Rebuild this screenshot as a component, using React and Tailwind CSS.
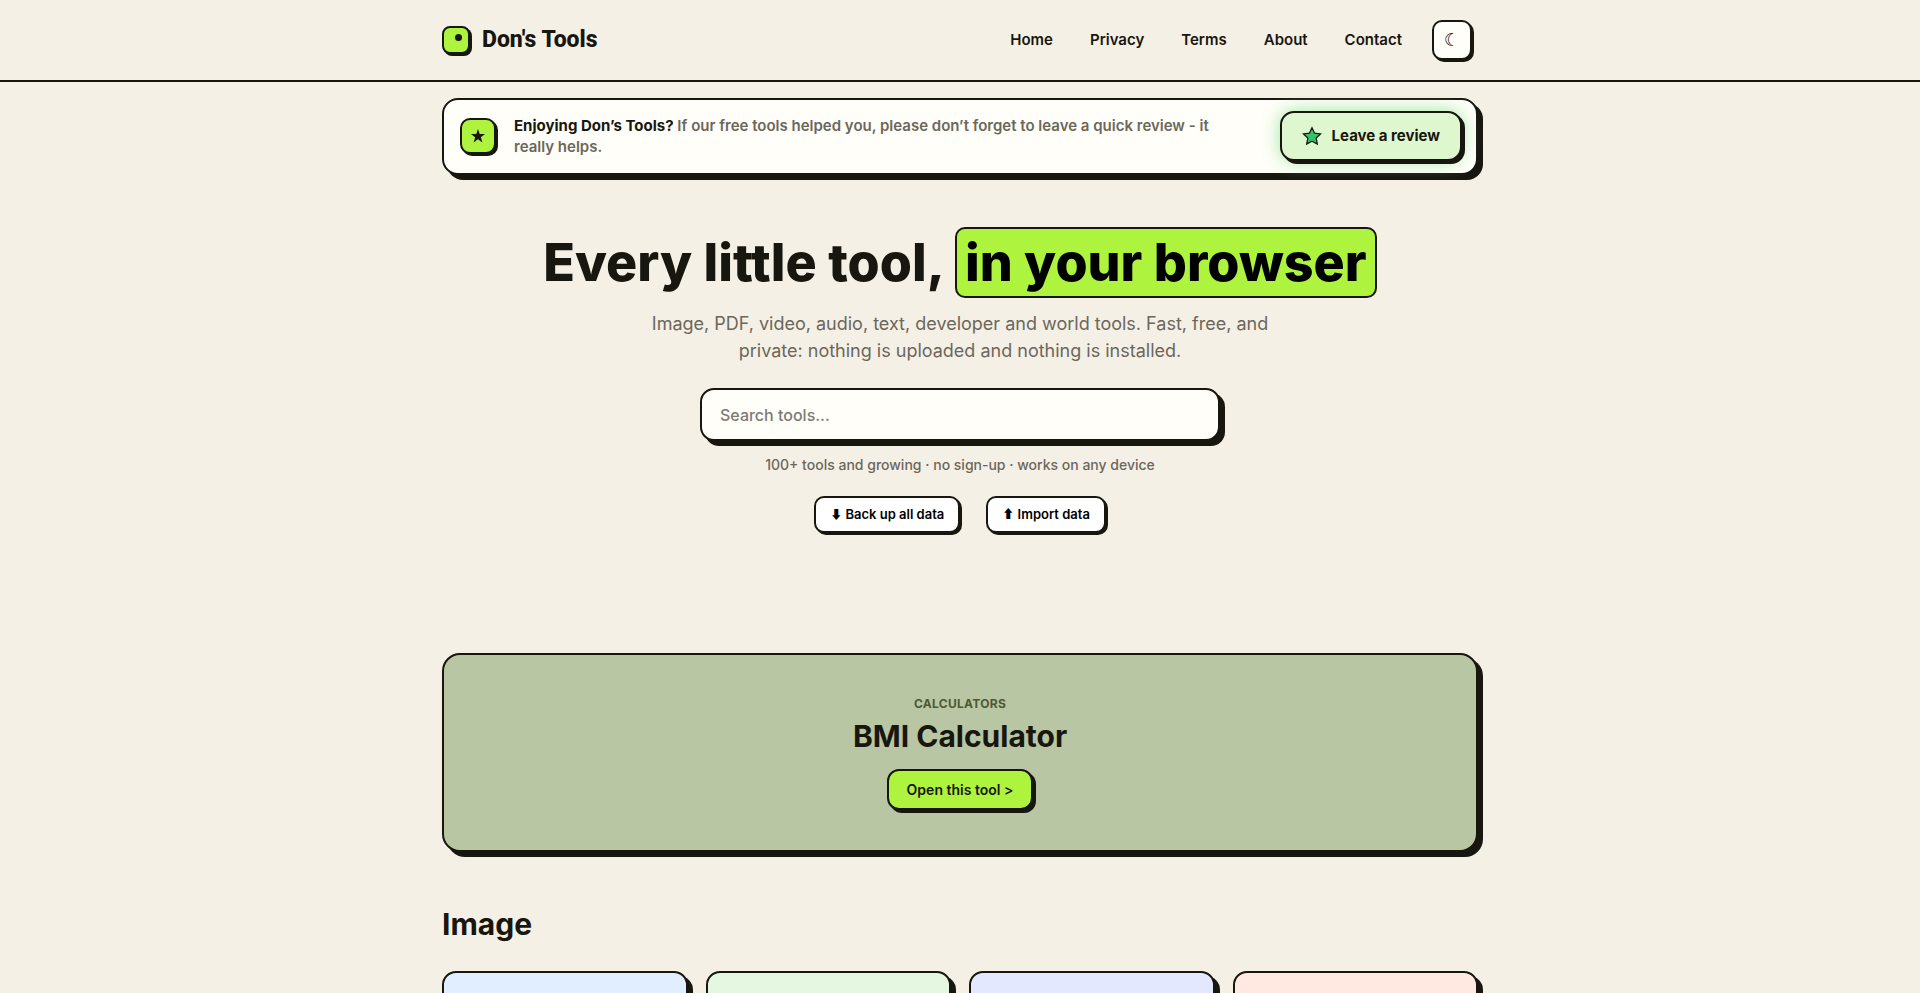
const links = ["Home", "Privacy", "Terms", "About", "Contact"];

const cards = [
  { id: "blue", className: "bg-[#e0eeff]" },
  { id: "green", className: "bg-[#e5f7e0]" },
  { id: "violet", className: "bg-[#e4e8ff]" },
  { id: "coral", className: "bg-[#ffe9e1]" },
];

function Star({ className }) {
  return (
    <svg viewBox="0 0 24 24" className={className} aria-hidden="true">
      <path d="M12 1.5l2.6 7.6h8l-6.4 4.8 2.4 7.7-6.6-4.7-6.6 4.7 2.4-7.7L1.4 9.1h8z" />
    </svg>
  );
}

function OutlineStar({ className }) {
  return (
    <svg viewBox="0 0 24 24" className={className} aria-hidden="true">
      <path d="M12 2l3.1 6.6 7.2.9-5.3 5 1.4 7.2-6.4-3.5-6.4 3.5L7 14.500l-5.300-5 7.200-.9z" />
    </svg>
  );
}

function Header() {
  return (
    <header className="border-b-2 border-[#17160f]">
      <div className="mx-auto flex h-20 max-w-[1080px] items-center justify-between px-[22px]">
        <a href="#" className="flex items-center gap-3 font-[Roboto,sans-serif] text-[23px] font-extrabold">
          <span className="flex size-7 justify-end rounded-lg border-2 border-[#17160f] bg-[#aef33e] p-[6px] shadow-[2px_2px_0_#17160f]">
            <span className="size-[7px] rounded-full bg-[#17160f]" />
          </span>
          Don's Tools
        </a>
        <div className="mr-[6px] flex items-center gap-[30px]">
          <nav className="flex gap-[37px] text-[15px] font-semibold">
            {links.map((link) => (
              <a key={link} href="#">
                {link}
              </a>
            ))}
          </nav>
          <button
            aria-label="Toggle theme"
            className="flex size-10 items-center justify-center rounded-[10px] border-2 border-[#17160f] bg-[#fffef9] font-['DejaVu_Sans',sans-serif] text-lg shadow-[2px_2px_0_#17160f]"
          >
            ☾
          </button>
        </div>
      </div>
    </header>
  );
}

function ReviewBanner() {
  return (
    <section className="mt-4 flex items-center gap-[18px] rounded-2xl border-2 border-[#17160f] bg-[#fffef9] pt-[11px] pr-[14px] pb-3 pl-4 shadow-[5px_5px_0_#17160f]">
      <span className="flex size-9 shrink-0 items-center justify-center rounded-[10px] border-2 border-[#17160f] bg-[#aef33e] shadow-[2px_2px_0_#17160f]">
        <Star className="size-4 fill-[#17160f]" />
      </span>
      <p className="flex-1 pr-12 text-[15px] leading-[21px] font-semibold text-[#6b675b]">
        <strong className="font-bold text-[#17160f]">Enjoying Don’s Tools?</strong> If our free tools helped you, please
        don’t forget to leave a quick review - it really helps.
      </p>
      <button className="flex h-[50px] shrink-0 items-center gap-[10px] rounded-[14px] border-2 border-[#17160f] bg-[#dff7cf] px-5 text-[15px] font-bold shadow-[3px_3px_0_#17160f,0_0_18px_#9be8a0]">
        <OutlineStar className="size-5 fill-[#35c26b] stroke-[#17160f] stroke-[1.5]" />
        Leave a review
      </button>
    </section>
  );
}

function Hero() {
  return (
    <section className="flex flex-col items-center pt-[52px] text-center">
      <h1 className="flex flex-wrap justify-center gap-x-[10px] text-[52px] leading-[71px] font-extrabold">
        <span>Every little tool,</span>
        <span className="rounded-[10px] border-2 border-[#17160f] bg-[#aef33e] px-2 leading-[67px] text-black">
          in your browser
        </span>
      </h1>
      <p className="mt-3 max-w-[640px] text-lg leading-[27px] text-[#6b675b]">
        Image, PDF, video, audio, text, developer and world tools. Fast, free, and private: nothing is uploaded and
        nothing is installed.
      </p>
      <input
        type="search"
        aria-label="Search tools"
        placeholder="Search tools..."
        className="mt-6 h-[53px] w-full max-w-[520px] rounded-[14px] border-2 border-[#17160f] bg-[#fffef9] px-[18px] text-base font-medium shadow-[5px_5px_0_#17160f] outline-none placeholder:text-[#7b7a76]"
      />
      <p className="mt-[14px] text-sm leading-5 font-medium text-[#6b675b]">
        100+ tools and growing · no sign-up · works on any device
      </p>
      <div className="mt-[21px] flex gap-[26px] text-[13px] font-semibold text-black">
        <button className="h-[37px] rounded-[10px] border-2 border-[#17160f] bg-white px-[14px] shadow-[2px_2px_0_#17160f]">
          <span className="font-['Noto_Sans_CJK_JP',sans-serif] text-xs">⬇</span> Back up all data
        </button>
        <button className="h-[37px] rounded-[10px] border-2 border-[#17160f] bg-white px-[14px] shadow-[2px_2px_0_#17160f]">
          <span className="font-['Noto_Sans_CJK_JP',sans-serif] text-xs">⬆</span> Import data
        </button>
      </div>
    </section>
  );
}

function FeaturedTool() {
  return (
    <section className="mt-[120px] flex flex-col items-center rounded-[18px] border-2 border-[#17160f] bg-[#b9c6a3] py-10 shadow-[5px_5px_0_#17160f]">
      <p className="text-xs leading-[18px] font-bold tracking-wide text-[#4c5a34] uppercase">Calculators</p>
      <h2 className="mt-1 text-3xl leading-[38px] font-bold">BMI Calculator</h2>
      <a
        href="#"
        className="mt-[14px] flex h-[41px] items-center rounded-xl border-2 border-[#17160f] bg-[#aef33e] px-[18px] text-sm font-semibold shadow-[3px_3px_0_#17160f]"
      >
        Open this tool &gt;
      </a>
    </section>
  );
}

export default function App() {
  return (
    <div className="h-screen overflow-hidden bg-[#f5f0e6] font-[Inter,sans-serif] text-[#17160f]">
      <Header />
      <main className="mx-auto max-w-[1080px] px-[22px]">
        <ReviewBanner />
        <Hero />
        <FeaturedTool />
        <h2 className="mt-[51px] text-3xl leading-[42px] font-bold">Image</h2>
        <div className="mt-[26px] grid grid-cols-4 gap-[18px]">
          {cards.map((card) => (
            <article
              key={card.id}
              className={`h-44 rounded-[14px] border-2 border-[#17160f] shadow-[5px_5px_0_#17160f] ${card.className}`}
            />
          ))}
        </div>
      </main>
    </div>
  );
}
